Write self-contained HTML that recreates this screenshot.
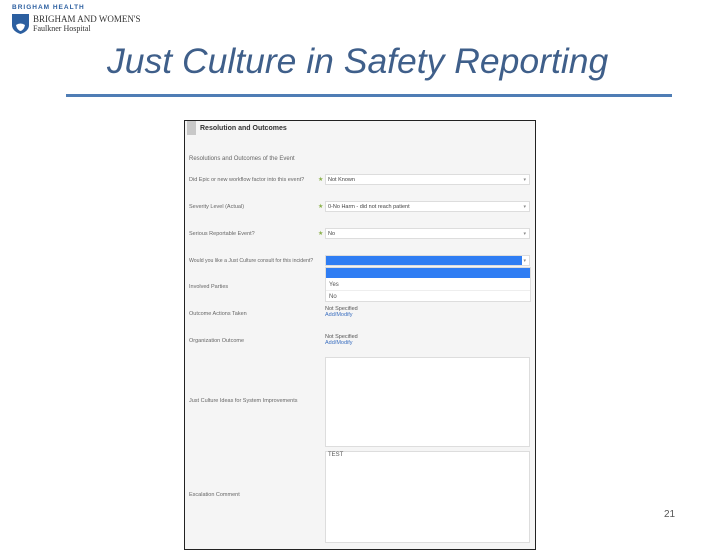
<!DOCTYPE html>
<html><head><meta charset="utf-8"><style>
body{margin:0;width:720px;height:540px;background:#fff;position:relative;overflow:hidden;font-family:"Liberation Sans",sans-serif}
.a{position:absolute}
.lbl{position:absolute;left:189px;font-size:5.5px;color:#666;white-space:nowrap}
.sel{position:absolute;left:325px;width:205px;height:11px;background:#fff;border:1px solid #ddd;box-sizing:border-box;font-size:5.5px;color:#444;padding-left:2px;line-height:10px}
.sel:after{content:"▾";position:absolute;right:3px;top:0;font-size:5px;color:#888}
.star{position:absolute;left:318px;font-size:6px;color:#8ab04a}
.ta{position:absolute;left:325px;width:205px;background:#fff;border:1px solid #ddd;box-sizing:border-box}
</style></head><body>
<div class="a" style="left:12px;top:4px;font-size:6.5px;font-weight:bold;color:#2c5fa0;letter-spacing:1px">BRIGHAM HEALTH</div>
<svg class="a" style="left:12px;top:14px" width="17" height="20"><path d="M0 0H17V11Q17 17 8.5 20Q0 17 0 11Z" fill="#2c5fa0"/><path d="M4 11Q8.5 8 13 11Q12 16 8.5 17Q5 16 4 11Z" fill="#fff"/></svg>
<div class="a" style="left:33px;top:14px;font-family:'Liberation Serif',serif;font-size:9px;color:#333">BRIGHAM AND WOMEN'S</div>
<div class="a" style="left:33px;top:24px;font-family:'Liberation Serif',serif;font-size:8px;color:#333">Faulkner Hospital</div>
<div class="a" style="left:107px;top:41px;font-size:35.5px;font-style:italic;color:#3f5f8a;white-space:nowrap">Just Culture in Safety Reporting</div>
<div class="a" style="left:66px;top:94px;width:606px;height:3px;background:#4f7db5"></div>
<div class="a" style="left:184px;top:120px;width:352px;height:430px;background:#f5f5f5;border:1px solid #222;box-sizing:border-box"></div>
<div class="a" style="left:187px;top:121px;width:9px;height:14px;background:#c8c8c8"></div>
<div class="a" style="left:200px;top:125px;font-size:7px;font-weight:bold;color:#333">Resolution and Outcomes</div>
<div class="lbl" style="top:156px;font-size:6px">Resolutions and Outcomes of the Event</div>
<div class="lbl" style="top:177px">Did Epic or new workflow factor into this event?</div>
<div class="star" style="top:176px">★</div><div class="sel" style="top:174px">Not Known</div>
<div class="lbl" style="top:204px">Severity Level (Actual)</div>
<div class="star" style="top:203px">★</div><div class="sel" style="top:201px">0-No Harm - did not reach patient</div>
<div class="lbl" style="top:231px">Serious Reportable Event?</div>
<div class="star" style="top:230px">★</div><div class="sel" style="top:228px">No</div>
<div class="lbl" style="top:258px;font-size:5.2px">Would you like a Just Culture consult for this incident?</div>
<div class="sel" style="top:255px;padding:0"><div style="width:196px;height:9px;background:#2f7df3"></div></div>
<div class="a" style="left:325px;top:267px;width:206px;height:35px;background:#fff;border:1px solid #ddd;box-sizing:border-box">
<div style="height:10px;background:#2f7df3"></div>
<div style="font-size:6px;color:#555;padding:4px 0 0 3px;height:8px;border-bottom:1px solid #eee">Yes</div>
<div style="font-size:6px;color:#555;padding:3px 0 0 3px">No</div></div>
<div class="lbl" style="top:284px">Involved Parties</div>
<div class="lbl" style="top:311px">Outcome Actions Taken</div>
<div class="a" style="left:325px;top:306px;font-size:5.5px;color:#555">Not Specified<br><span style="color:#3b6fc0">Add/Modify</span></div>
<div class="lbl" style="top:338px">Organization Outcome</div>
<div class="a" style="left:325px;top:334px;font-size:5.5px;color:#555">Not Specified<br><span style="color:#3b6fc0">Add/Modify</span></div>
<div class="ta" style="top:357px;height:90px"></div>
<div class="lbl" style="top:398px">Just Culture Ideas for System Improvements</div>
<div class="ta" style="top:451px;height:92px;font-size:6px;color:#555;padding-left:2px">TEST</div>
<div class="lbl" style="top:492px">Escalation Comment</div>
<div class="a" style="left:664px;top:509px;font-size:10px;color:#555">21</div>
</body></html>
